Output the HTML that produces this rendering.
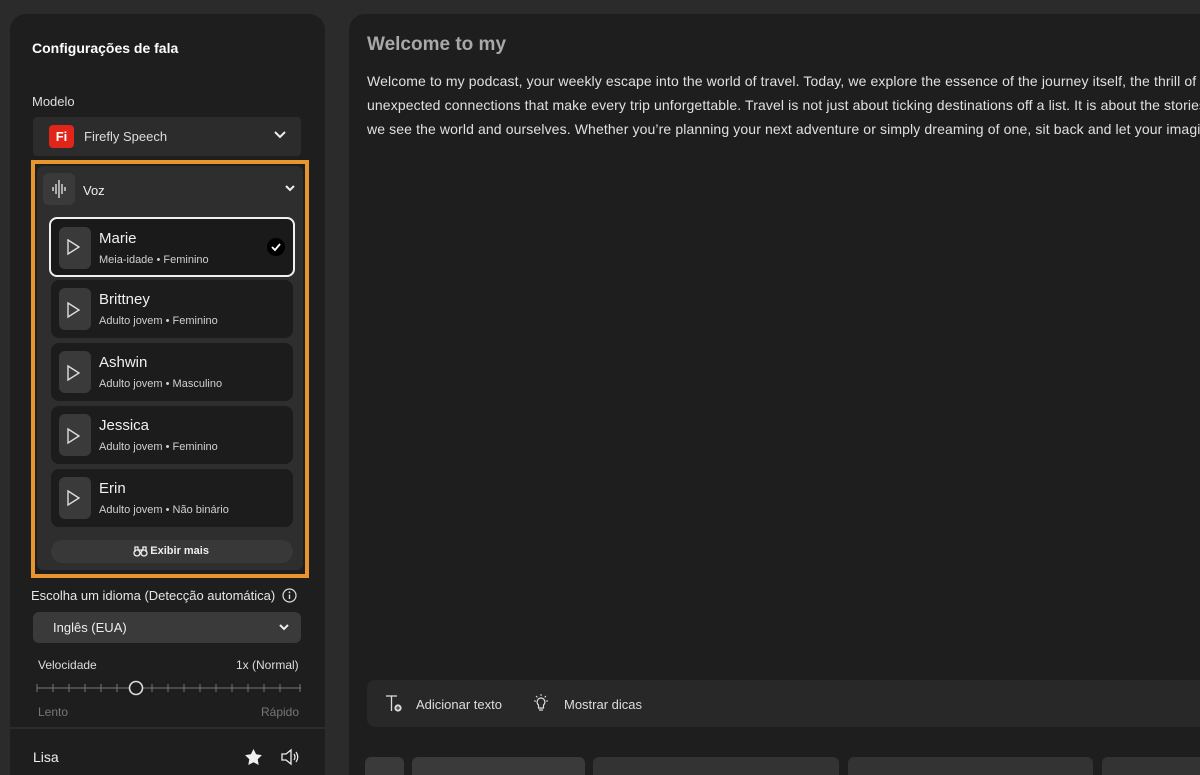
<!DOCTYPE html>
<html><head><meta charset="utf-8"><style>
*{box-sizing:border-box;margin:0;padding:0}
html,body{width:1200px;height:775px;overflow:hidden}
body{background:#2b2b2b;font-family:"Liberation Sans",sans-serif;color:#e8e8e8;position:relative}
.abs{position:absolute}
.lp{left:10px;top:14px;width:315px;height:761px;background:#1e1e1e;border-radius:16px 16px 0 0}
.rp{left:349px;top:14px;width:851px;height:761px;background:#1e1e1e;border-radius:16px 0 0 0;overflow:hidden}
.t13{font-size:13px}
.card{position:absolute;left:51px;width:242px;height:58px;background:#1c1c1c;border-radius:8px}
.card .pb{position:absolute;left:8px;top:8px;width:32px;height:42px;background:#3a3a3a;border-radius:6px}
.card .n{position:absolute;left:48px;top:11px;font-size:15px;color:#f0f0f0}
.card .s{position:absolute;left:48px;top:35px;font-size:11px;color:#d0d0d0}
.line{white-space:nowrap;font-size:14px;color:#e0e0e0;letter-spacing:0.12px;position:absolute;left:18px}
.rp .abs{position:absolute}
</style></head><body>
<div class="abs lp"></div>

<div class="abs" style="left:32px;top:40px;font-size:14px;font-weight:bold;color:#fff">Configurações de fala</div>
<div class="abs t13" style="left:32px;top:94px;color:#ddd">Modelo</div>
<div class="abs" style="left:33px;top:117px;width:268px;height:39px;background:#2c2c2c;border-radius:4px"></div>
<div class="abs" style="left:49px;top:125px;width:25px;height:23px;background:#e1251b;border-radius:4px;color:#fff;font-weight:bold;font-size:13px;text-align:center;line-height:23px">Fi</div>
<div class="abs t13" style="left:84px;top:129px;color:#ddd">Firefly Speech</div>
<svg class="abs" style="left:273px;top:130px" width="14" height="10"><path d="M2 2l5 5 5-5" stroke="#eee" stroke-width="2" fill="none"/></svg>

<div class="abs" style="left:31px;top:160px;width:278px;height:418px;border:4px solid #e8952f;background:#1e1e1e"></div>
<div class="abs" style="left:37px;top:166px;width:266px;height:404px;background:#2e2e2e;border-radius:6px"></div>
<div class="abs" style="left:43px;top:173px;width:32px;height:32px;background:#3a3a3a;border-radius:6px"></div>
<svg class="abs" style="left:51px;top:179px" width="16" height="20"><path d="M2 8v4M5 5v10M8 1v18M11 5v10M14 8v4" stroke="#ddd" stroke-width="1.4"/></svg>
<div class="abs t13" style="left:83px;top:183px;color:#eee">Voz</div>
<svg class="abs" style="left:284px;top:184px" width="12" height="9"><path d="M2 2l4 4 4-4" stroke="#eee" stroke-width="2" fill="none"/></svg>

<div class="card" style="left:49px;top:217px;width:246px;height:60px;border:2px solid #f0f0f0;background:#1a1a1a"><div class="pb"></div><div class="n">Marie</div><div class="s">Meia-idade • Feminino</div>
<div style="position:absolute;right:8px;top:19px;width:18px;height:18px;border-radius:50%;background:#000"></div>
<svg style="position:absolute;right:11px;top:23px" width="12" height="10"><path d="M2 5l3 3 5-6" stroke="#fff" stroke-width="1.8" fill="none"/></svg></div>
<div class="card" style="top:280px"><div class="pb"></div><div class="n">Brittney</div><div class="s">Adulto jovem • Feminino</div></div>
<div class="card" style="top:343px"><div class="pb"></div><div class="n">Ashwin</div><div class="s">Adulto jovem • Masculino</div></div>
<div class="card" style="top:406px"><div class="pb"></div><div class="n">Jessica</div><div class="s">Adulto jovem • Feminino</div></div>
<div class="card" style="top:469px"><div class="pb"></div><div class="n">Erin</div><div class="s">Adulto jovem • Não binário</div></div>
<svg class="abs" style="left:66px;top:239px" width="16" height="280">
<g stroke="#ddd" stroke-width="1.4" fill="none"><path d="M2 1l11 7-11 7z"/><path d="M2 64l11 7-11 7z"/><path d="M2 127l11 7-11 7z"/><path d="M2 190l11 7-11 7z"/><path d="M2 252l11 7-11 7z"/></g></svg>

<div class="abs" style="left:51px;top:540px;width:242px;height:23px;background:#383838;border-radius:12px;font-size:11px;font-weight:bold;color:#eee;text-align:center;line-height:23px">&nbsp;&nbsp;&nbsp;&nbsp;&nbsp;Exibir mais</div>
<svg class="abs" style="left:133px;top:544px" width="15" height="13"><g stroke="#eee" stroke-width="1.3" fill="none"><circle cx="4" cy="9" r="3"/><circle cx="11" cy="9" r="3"/><path d="M2 8V3h3v3M13 8V3h-3v3M5 6h5"/></g></svg>

<div class="abs t13" style="left:31px;top:588px;color:#e6e6e6">Escolha um idioma (Detecção automática)</div>
<svg class="abs" style="left:282px;top:588px" width="15" height="15"><circle cx="7.5" cy="7.5" r="6.5" stroke="#ddd" stroke-width="1.2" fill="none"/><path d="M7.5 6.5v4.5" stroke="#ddd" stroke-width="1.4"/><circle cx="7.5" cy="4.3" r=".9" fill="#ddd"/></svg>
<div class="abs" style="left:33px;top:612px;width:268px;height:31px;background:#3a3a3a;border-radius:6px"></div>
<div class="abs t13" style="left:53px;top:620px;color:#eee">Inglês (EUA)</div>
<svg class="abs" style="left:278px;top:623px" width="12" height="9"><path d="M2 2l4 4 4-4" stroke="#eee" stroke-width="2" fill="none"/></svg>
<div class="abs" style="left:38px;top:658px;font-size:12px;color:#ddd">Velocidade</div>
<div class="abs" style="left:236px;top:658px;font-size:12px;color:#ddd">1x (Normal)</div>
<svg class="abs" style="left:35px;top:679px" width="270" height="20"><path d="M2 9H94M108 9H266" stroke="#777" stroke-width="1"/>
<g stroke="#777"><path d="M2 5v8M18 5v8M34 5v8M50 5v8M66 5v8M82 5v8M117 5v8M133 5v8M149 5v8M165 5v8M181 5v8M197 5v8M213 5v8M229 5v8M245 5v8M265 5v8"/></g>
<circle cx="101" cy="9" r="6.5" fill="#1e1e1e" stroke="#ddd" stroke-width="1.6"/></svg>
<div class="abs" style="left:38px;top:705px;font-size:12px;color:#777">Lento</div>
<div class="abs" style="left:261px;top:705px;font-size:12px;color:#777">Rápido</div>
<div class="abs" style="left:10px;top:727px;width:315px;height:2px;background:#2c2c2c"></div>
<div class="abs" style="left:33px;top:749px;font-size:14px;color:#f0f0f0">Lisa</div>
<svg class="abs" style="left:244px;top:748px" width="19" height="18"><path d="M9.5 1l2.6 5.3 5.8.8-4.2 4.1 1 5.8-5.2-2.7-5.2 2.7 1-5.8L1.1 7.1l5.8-.8z" fill="#f0f0f0"/></svg>
<svg class="abs" style="left:280px;top:748px" width="20" height="18"><path d="M2 6h4l5-4v14l-5-4H2z" stroke="#eee" stroke-width="1.3" fill="none"/><path d="M14 6q2 3 0 6M16 4q3.5 5 0 10" stroke="#eee" stroke-width="1.2" fill="none"/></svg>

<div class="abs rp">
<div class="abs" style="left:18px;top:20px;font-size:19px;font-weight:bold;color:#a8a8a8">Welcome to my</div>
<div class="line" style="top:59px">Welcome to my podcast, your weekly escape into the world of travel. Today, we explore the essence of the journey itself, the thrill of</div>
<div class="line" style="top:83px">unexpected connections that make every trip unforgettable. Travel is not just about ticking destinations off a list. It is about the stories</div>
<div class="line" style="top:107px">we see the world and ourselves. Whether you’re planning your next adventure or simply dreaming of one, sit back and let your imagination</div>

<div class="abs" style="left:18px;top:666px;width:860px;height:47px;background:#282828;border-radius:8px"></div>
<svg class="abs" style="left:36px;top:680px" width="20" height="20"><path d="M1 2h11M6.5 2v15" stroke="#ddd" stroke-width="1.3"/><circle cx="13" cy="14" r="3.6" fill="#ddd"/><path d="M13 12v4M11 14h4" stroke="#282828" stroke-width="1"/></svg>
<div class="abs t13" style="left:67px;top:683px;color:#ddd">Adicionar texto</div>
<svg class="abs" style="left:183px;top:680px" width="18" height="18"><path d="M9 4a4 4 0 0 0-2.5 7v3h5v-3A4 4 0 0 0 9 4zM7 16h4" stroke="#ddd" stroke-width="1.2" fill="none"/><path d="M9 0v2M2 7h2M14 7h2M4 2l1.4 1.4M14 2l-1.4 1.4" stroke="#ddd" stroke-width="1"/></svg>
<div class="abs t13" style="left:215px;top:683px;color:#ddd">Mostrar dicas</div>

<div class="abs" style="left:16px;top:743px;width:39px;height:30px;background:#3a3a3a;border-radius:6px"></div>
<div class="abs" style="left:63px;top:743px;width:173px;height:30px;background:#3a3a3a;border-radius:6px"></div>
<div class="abs" style="left:244px;top:743px;width:246px;height:30px;background:#333;border-radius:6px"></div>
<div class="abs" style="left:499px;top:743px;width:245px;height:30px;background:#333;border-radius:6px"></div>
<div class="abs" style="left:753px;top:743px;width:120px;height:30px;background:#333;border-radius:6px"></div>
</div>
</body></html>
